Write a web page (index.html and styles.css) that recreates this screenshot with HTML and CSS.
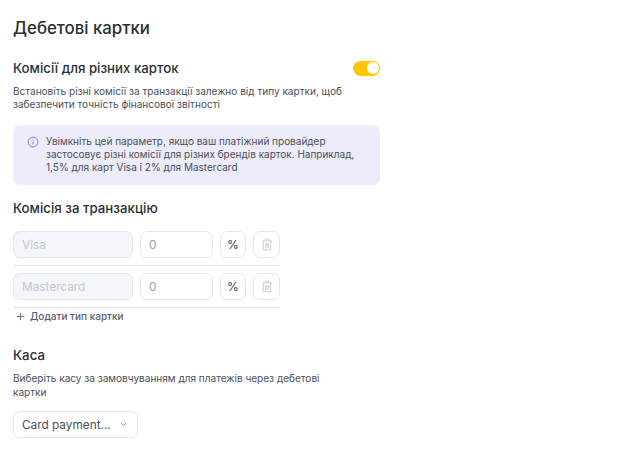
FILE: index.html
```html
<!DOCTYPE html>
<html lang="uk">
<head>
<meta charset="utf-8">
<title>Дебетові картки</title>
<link rel="stylesheet" href="styles.css">
</head>
<body>
<main class="page">
  <h1 class="title">Дебетові картки</h1>
  <div class="head-row">
    <h2 class="subtitle">Комісії для різних карток</h2>
    <span class="toggle"><span class="knob"></span></span>
  </div>
  <p class="desc">Встановіть різні комісії за транзакції залежно від типу картки, щоб забезпечити точність фінансової звітності</p>
  <div class="note">
    <svg class="note-icon" width="12" height="12" viewBox="0 0 12 12" fill="none"><circle cx="6" cy="6" r="4.9" stroke="#8f7bf5" stroke-width="1"/><path d="M6 5.6v2.6M6 3.6v.7" stroke="#8f7bf5" stroke-width="1"/></svg>
    <p class="note-text">Увімкніть цей параметр, якщо ваш платіжний провайдер застосовує різні комісії для різних брендів карток. Наприклад, 1,5% для карт Visa і 2% для Mastercard</p>
  </div>
  <h2 class="section-title">Комісія за транзакцію</h2>
  <div class="fees">
    <div class="fee-row">
      <div class="field field-name">Visa</div>
      <div class="field field-value">0</div>
      <div class="square">%</div>
      <div class="square square-del">
        <svg width="12" height="13" viewBox="0 0 12 13" fill="none" stroke="#c9d3d8" stroke-width="1"><path d="M1 2.9h10M4 2.7V1.2h4v1.5M2.3 3v8.8h7.4V3M4.6 5v5M6 5v5M7.4 5v5"/></svg>
      </div>
    </div>
    <div class="fee-row">
      <div class="field field-name">Mastercard</div>
      <div class="field field-value">0</div>
      <div class="square">%</div>
      <div class="square square-del">
        <svg width="12" height="13" viewBox="0 0 12 13" fill="none" stroke="#c9d3d8" stroke-width="1"><path d="M1 2.9h10M4 2.7V1.2h4v1.5M2.3 3v8.8h7.4V3M4.6 5v5M6 5v5M7.4 5v5"/></svg>
      </div>
    </div>
  </div>
  <div class="add">
    <svg width="9" height="9" viewBox="0 0 9 9" fill="none" stroke="#6b7280" stroke-width="1"><path d="M4.5 .8v7.4M.8 4.5h7.4"/></svg>
    <span>Додати тип картки</span>
  </div>
  <h2 class="cash-title">Каса</h2>
  <p class="cash-desc">Виберіть касу за замовчуванням для платежів через дебетові картки</p>
  <div class="select">
    <span>Card payment...</span>
    <svg width="7" height="5" viewBox="0 0 7 5" fill="none" stroke="#8a94a3" stroke-width="1"><path d="M1 1l2.5 2.5L6 1"/></svg>
  </div>
</main>
</body>
</html>
```
FILE: styles.css
```css
* { box-sizing: border-box; }
html, body { margin: 0; padding: 0; background: #fff; }
body { font-family: Inter, "Noto Sans", sans-serif; color: #2b2f36; }
.page { width: 380px; padding: 18px 0 0 13px; }
h1, h2, p { margin: 0; font-weight: 400; }
.title { font-size: 16.8px; line-height: 21px; font-weight: 450; color: #2a2d33; }
.head-row { display: flex; justify-content: space-between; align-items: center; margin-top: 19px; height: 20px; }
.subtitle { font-size: 13.25px; line-height: 20px; font-weight: 450; }
.toggle { width: 27px; height: 15px; border-radius: 8px; background: #ffc700; display: flex; align-items: center; justify-content: flex-end; padding-right: 1.5px; }
.knob { width: 12px; height: 12px; border-radius: 50%; background: #fff; }
.desc { margin-top: 7px; font-size: 10.05px; line-height: 13px; color: #4a505a; }
.note { display: flex; gap: 7px; margin-top: 14px; height: 60px; padding: 10px 14px; background: #edecfa; border-radius: 7px; color: #4a505a; }
.note-icon { flex: none; margin-top: 1px; }
.note-text { font-size: 10px; line-height: 13px; width: 315px; }
.section-title { margin-top: 13px; font-size: 13.25px; line-height: 20px; font-weight: 450; }
.fees { width: 267px; margin-top: 13px; }
.fee-row { display: flex; gap: 7px; height: 35px; border-bottom: 1px solid #e3e4ec; }
.fee-row + .fee-row { margin-top: 7px; }
.field { height: 27px; border: 1px solid #e4e6ef; border-radius: 7px; font-size: 11.8px; line-height: 26px; padding-left: 8px; color: #c3c8d0; }
.field-name { width: 120px; background: #f5f6fb; }
.field-value { width: 73px; color: #98a0ac; }
.square { width: 26px; height: 27px; border: 1px solid #e4e6ef; border-radius: 7px; display: flex; align-items: center; justify-content: center; font-size: 12px; color: #2c3e5c; }
.square-del { width: 27px; }
.add { display: flex; align-items: center; gap: 5px; margin-top: 1px; padding-left: 3px; height: 14px; font-size: 10px; font-weight: 450; color: #596070; }
.cash-title { margin-top: 22px; font-size: 13.25px; line-height: 20px; font-weight: 450; }
.cash-desc { margin-top: 6px; width: 320px; font-size: 10.05px; line-height: 14px; color: #4a505a; }
.select { display: flex; align-items: center; gap: 9px; width: 125px; height: 27px; margin-top: 12px; padding-left: 8px; border: 1px solid #e4e6ef; border-radius: 7px; font-size: 11.8px; color: #4a505a; }
```
